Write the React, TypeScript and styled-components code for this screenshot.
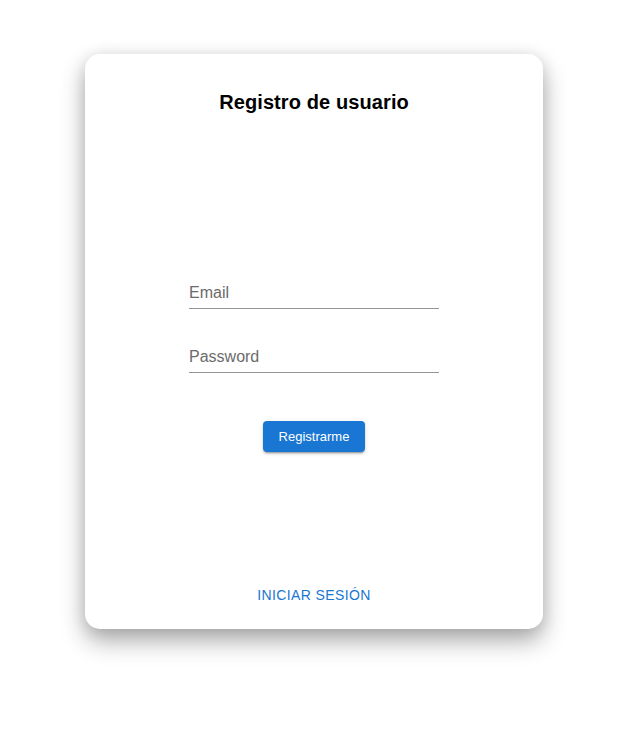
import React from "react";
import styled, { createGlobalStyle } from "styled-components";

const GlobalStyle = createGlobalStyle`
  html, body {
    margin: 0;
    padding: 0;
    background: #ffffff;
    font-family: "Liberation Sans", Arial, Helvetica, sans-serif;
  }
`;

const Page = styled.div`
  display: flex;
  align-items: flex-start;
  box-sizing: border-box;
  min-height: 100vh;
  padding: 54px 0 80px 85px;
`;

const Card = styled.main`
  width: 458px;
  height: 575px;
  box-sizing: border-box;
  background: #ffffff;
  border-radius: 15px;
  box-shadow: 0 12px 24px rgba(0, 0, 0, 0.32), 0 2px 16px rgba(0, 0, 0, 0.1);
  display: flex;
  flex-direction: column;
  align-items: center;
  padding: 36px 0 22px;
`;

const Title = styled.h1`
  margin: 0;
  font-size: 20px;
  line-height: 24px;
  font-weight: 700;
  letter-spacing: 0.1px;
  color: #000000;
`;

const Form = styled.form`
  display: flex;
  flex-direction: column;
  align-items: center;
  margin-top: 163px;
`;

const Field = styled.input`
  display: block;
  width: 250px;
  box-sizing: border-box;
  border: none;
  border-bottom: 1px solid #949494;
  outline: none;
  background: transparent;
  padding: 4px 0 4px;
  margin: 0 0 32px;
  font-family: "Liberation Sans", Arial, sans-serif;
  font-size: 16px;
  line-height: 23px;
  height: 32px;
  color: #222;
  &::placeholder {
    color: #6b6b6b;
    opacity: 1;
  }
  &:last-of-type {
    margin-bottom: 0;
  }
`;

const SubmitButton = styled.button`
  margin-top: 48px;
  width: 102px;
  height: 31px;
  border: none;
  border-radius: 4px;
  background: #1976d2;
  color: #ffffff;
  font-family: "Liberation Sans", Arial, sans-serif;
  font-size: 13px;
  box-shadow: 0 3px 1px -2px rgba(0, 0, 0, 0.2), 0 2px 2px 0 rgba(0, 0, 0, 0.14),
    0 1px 5px 0 rgba(0, 0, 0, 0.12);
  cursor: pointer;
`;

const LinkButton = styled.button`
  margin-top: auto;
  border: none;
  background: transparent;
  padding: 0 8px;
  color: #1976d2;
  font-family: "Liberation Sans", Arial, sans-serif;
  font-size: 14px;
  line-height: 24.5px;
  letter-spacing: 0.4px;
  text-transform: uppercase;
  cursor: pointer;
`;

export default function App() {
  return (
    <>
      <GlobalStyle />
      <Page>
        <Card>
          <Title>Registro de usuario</Title>
          <Form onSubmit={(e) => e.preventDefault()}>
            <Field type="email" placeholder="Email" />
            <Field type="password" placeholder="Password" />
            <SubmitButton type="submit">Registrarme</SubmitButton>
          </Form>
          <LinkButton type="button">Iniciar sesión</LinkButton>
        </Card>
      </Page>
    </>
  );
}
